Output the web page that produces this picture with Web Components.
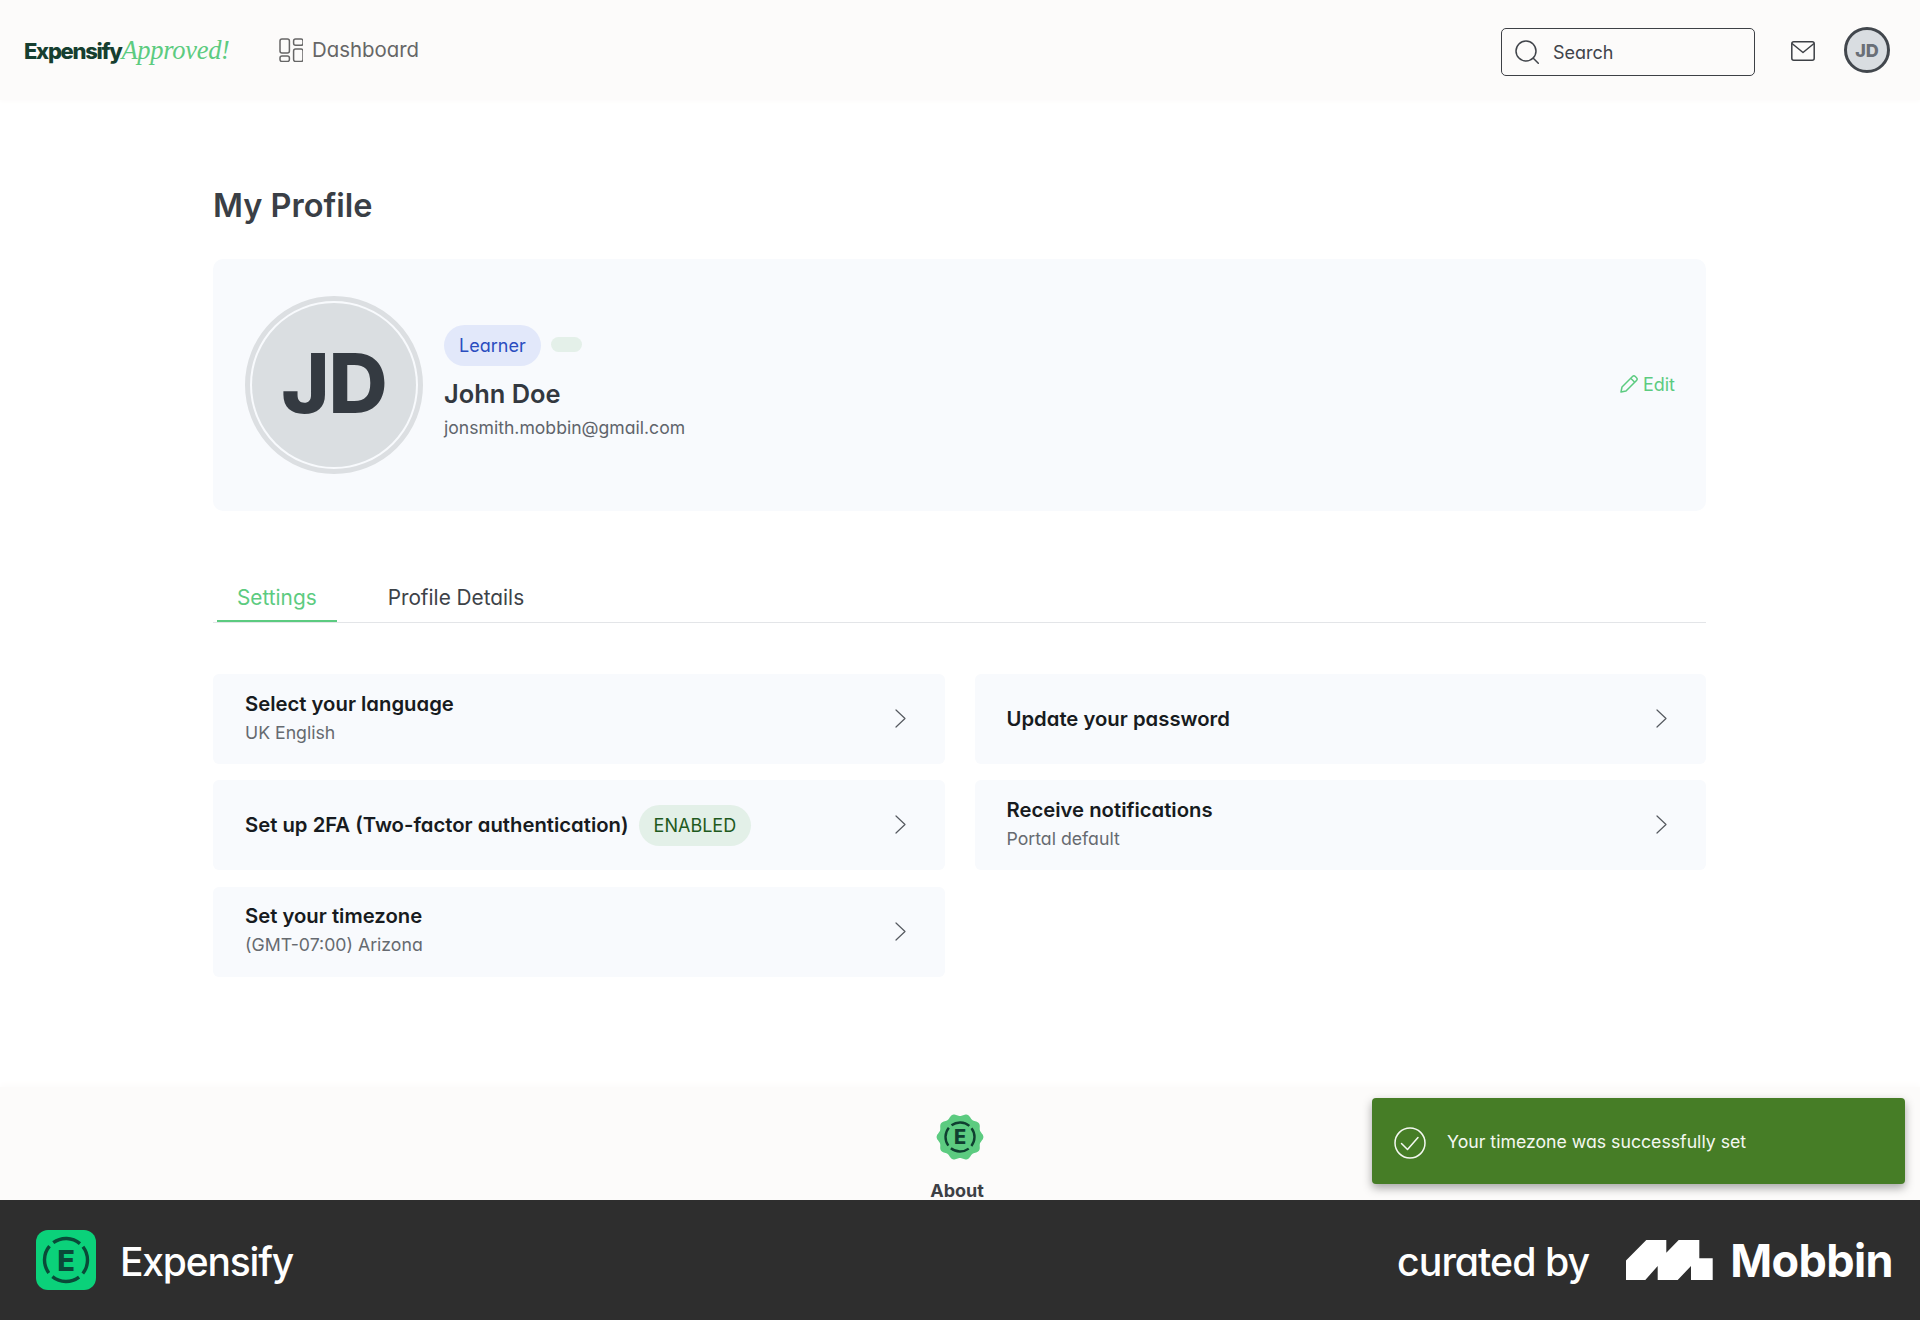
<!DOCTYPE html>
<html lang="en">
<head>
<meta charset="utf-8">
<title>My Profile</title>
<style>
    html, body {
        margin: 0;
        height: 1320px;
        overflow: hidden;
        background: white;
    }

    body {
        display: flex;
        flex-direction: column;
        position: relative;
        font-family: Inter, "Noto Sans", sans-serif;
        font-feature-settings: "cv11";
        color: #33383f;
    }

    profile-page {
        flex: 1;
    }
</style>
</head>
<body>
<app-header></app-header>
<profile-page>
    <profile-card name="John Doe" email="jonsmith.mobbin@gmail.com" initials="JD"></profile-card>
    <tab-bar></tab-bar>
    <settings-grid>
        <setting-row slot="left" label="Select your language" value="UK English"></setting-row>
        <setting-row slot="left" label="Set up 2FA (Two-factor authentication)" badge="ENABLED"></setting-row>
        <setting-row slot="left" label="Set your timezone" value="(GMT-07:00) Arizona"></setting-row>
        <setting-row slot="right" label="Update your password"></setting-row>
        <setting-row slot="right" label="Receive notifications" value="Portal default"></setting-row>
    </settings-grid>
</profile-page>
<site-footer></site-footer>
<toast-message>Your timezone was successfully set</toast-message>
<brand-bar></brand-bar>

<script>
class AppHeader extends HTMLElement {
    connectedCallback() {
        this.attachShadow({mode: "open"}).innerHTML = `
            <style>
                :host {
                    display: flex;
                    align-items: center;
                    height: 100px;
                    flex: none;
                    padding: 0 30px 0 24px;
                    background: #fcfbfa;
                    box-shadow: 0 2px 4px #fdfcfb;
                }
                .logo {
                    display: flex;
                    align-items: baseline;
                    width: 255px;
                }
                .logo b {
                    font-size: 22px;
                    font-weight: 800;
                    letter-spacing: -1.3px;
                    color: #163f30;
                }
                .logo i {
                    font: italic 400 26.5px "Liberation Serif", serif;
                    letter-spacing: -0.3px;
                    color: #5ccb80;
                }
                .nav {
                    display: flex;
                    align-items: center;
                    gap: 9px;
                    margin-top: -1px;
                    font-size: 20.4px;
                    color: #666666;
                }
                .search {
                    display: flex;
                    align-items: center;
                    gap: 14px;
                    box-sizing: border-box;
                    width: 254px;
                    height: 48px;
                    margin: 4px 0 0 auto;
                    padding-left: 13px;
                    border: 1.5px solid #3d4045;
                    border-radius: 5px;
                    font-size: 18px;
                    color: #40444a;
                }
                .mail {
                    margin: 1px 0 0 36px;
                }
                .avatar {
                    display: grid;
                    place-items: center;
                    box-sizing: border-box;
                    width: 46px;
                    height: 46px;
                    margin-left: 29px;
                    border: 3px solid #42474d;
                    border-radius: 50%;
                    background: #d9dde1;
                    font-size: 18px;
                    font-weight: 800;
                    color: #6a6f77;
                }
                svg {
                    display: block;
                    fill: none;
                    flex: none;
                }
            </style>
            <div class="logo"><b>Expensify</b><i>Approved!</i></div>
            <div class="nav">
                <svg width="24" height="24" viewBox="0 0 24 24" stroke="#666" stroke-width="1.5">
                    <rect x="1" y="1" width="9.4" height="14" rx="2"/>
                    <rect x="1" y="18" width="9.4" height="5.5" rx="2"/>
                    <rect x="14.6" y="1" width="9.4" height="6.3" rx="2"/>
                    <rect x="14.6" y="11" width="9.4" height="12.5" rx="2"/>
                </svg>
                <span>Dashboard</span>
            </div>
            <div class="search">
                <svg width="24" height="24" viewBox="0 0 24 24" stroke="#40444a" stroke-width="1.5" stroke-linecap="round">
                    <circle cx="11" cy="11" r="10"/>
                    <path d="M18.3 18.3l5 5"/>
                </svg>
                <span>Search</span>
            </div>
            <svg class="mail" width="24" height="20" viewBox="0 0 24 20" stroke="#3d4045" stroke-width="1.5" stroke-linejoin="round">
                <rect x="0.8" y="0.8" width="22.4" height="18.4" rx="2"/>
                <path d="M1 2.5l11 9 11-9"/>
            </svg>
            <div class="avatar">JD</div>
        `;
    }
}

class ProfileCard extends HTMLElement {
    connectedCallback() {
        const name = this.getAttribute("name");
        const email = this.getAttribute("email");
        const initials = this.getAttribute("initials");
        this.attachShadow({mode: "open"}).innerHTML = `
            <style>
                :host {
                    display: flex;
                    align-items: center;
                    box-sizing: border-box;
                    height: 252px;
                    padding: 0 31px 0 32px;
                    border-radius: 10px;
                    background: #f8fafd;
                }
                .avatar {
                    display: grid;
                    place-items: center;
                    box-sizing: border-box;
                    width: 178px;
                    height: 178px;
                    flex: none;
                    border: 5px solid #dcdfe2;
                    border-radius: 50%;
                    background: #dadee1 content-box;
                    padding: 2px;
                    font-size: 82px;
                    line-height: 160px;
                    font-weight: 800;
                    letter-spacing: -1px;
                    color: #343a41;
                }
                .avatar span {
                    margin-top: -2px;
                }
                .info {
                    margin-left: 21px;
                    padding-bottom: 5px;
                }
                .pills {
                    display: flex;
                    align-items: center;
                    gap: 10px;
                }
                .learner {
                    padding: 0 15px;
                    height: 41px;
                    line-height: 41px;
                    border-radius: 21px;
                    background: #e2e8fa;
                    font-size: 18px;
                    color: #2a4dc0;
                }
                .empty {
                    width: 31px;
                    height: 15px;
                    margin-top: -2px;
                    border-radius: 8px;
                    background: #e4f0e9;
                }
                .name {
                    margin-top: 12px;
                    font-size: 25.4px;
                    line-height: 32px;
                    font-weight: 600;
                }
                .email {
                    margin-top: 6px;
                    font-size: 17.6px;
                    line-height: 24px;
                    color: #5f646b;
                }
                .edit {
                    display: flex;
                    align-items: center;
                    gap: 5px;
                    margin: -2px 0 0 auto;
                    font-size: 18px;
                    color: #5ccb80;
                }
            </style>
            <div class="avatar"><span>${initials}</span></div>
            <div class="info">
                <div class="pills"><span class="learner">Learner</span><span class="empty"></span></div>
                <div class="name">${name}</div>
                <div class="email">${email}</div>
            </div>
            <div class="edit">
                <svg width="18" height="18" viewBox="0 0 18 18" fill="none" stroke="#5ccb80" stroke-width="1.5" stroke-linejoin="round">
                    <path d="M1 17l1-5L12.5 1.5a2 2 0 0 1 2.8 0l1.2 1.2a2 2 0 0 1 0 2.8L6 16z"/>
                    <path d="M11 3.5l3.5 3.5"/>
                </svg>
                <span>Edit</span>
            </div>
        `;
    }
}

class TabBar extends HTMLElement {
    connectedCallback() {
        this.attachShadow({mode: "open"}).innerHTML = `
            <style>
                :host {
                    display: flex;
                    gap: 31px;
                    margin-top: 63px;
                    padding-left: 4px;
                    border-bottom: 1px solid #e3e5e8;
                    font-size: 20.8px;
                }
                .tab {
                    padding: 0 20px;
                    height: 48px;
                    line-height: 48px;
                    box-sizing: border-box;
                    color: #3d4248;
                }
                .active {
                    color: #5ccb80;
                    border-bottom: 2px solid #5ccb80;
                    margin-bottom: -1px;
                }
            </style>
            <div class="tab active">Settings</div>
            <div class="tab">Profile Details</div>
        `;
    }
}

class SettingsGrid extends HTMLElement {
    connectedCallback() {
        this.attachShadow({mode: "open"}).innerHTML = `
            <style>
                :host {
                    display: grid;
                    grid-template-columns: 1fr 1fr;
                    gap: 30px;
                    margin-top: 51px;
                }
                .col {
                    display: flex;
                    flex-direction: column;
                    gap: 16.25px;
                }
            </style>
            <div class="col"><slot name="left"></slot></div>
            <div class="col"><slot name="right"></slot></div>
        `;
    }
}

class SettingRow extends HTMLElement {
    connectedCallback() {
        const label = this.getAttribute("label");
        const value = this.getAttribute("value");
        const badge = this.getAttribute("badge");
        this.attachShadow({mode: "open"}).innerHTML = `
            <style>
                :host {
                    display: flex;
                    align-items: center;
                    box-sizing: border-box;
                    height: 90px;
                    padding: 0 39px 0 32px;
                    border-radius: 6px;
                    background: #f8fafd;
                }
                .label {
                    font-size: 20.3px;
                    line-height: 28px;
                    font-weight: 600;
                    color: #171b20;
                }
                .line {
                    display: flex;
                    align-items: center;
                    gap: 10px;
                }
                .two-line {
                    padding-bottom: 4px;
                }
                .value {
                    font-size: 17.7px;
                    line-height: 24px;
                    margin-top: 3px;
                    color: #666a70;
                }
                .badge {
                    height: 41px;
                    line-height: 41px;
                    padding: 0 15px;
                    border-radius: 21px;
                    background: #e3f0e8;
                    font-size: 18px;
                    color: #1f5a1e;
                }
                svg {
                    margin: -1px 0 0 auto;
                    flex: none;
                }
            </style>
            <div class="${value ? "two-line" : ""}">
                <div class="line">
                    <span class="label">${label}</span>
                    ${badge ? `<span class="badge">${badge}</span>` : ""}
                </div>
                ${value ? `<div class="value">${value}</div>` : ""}
            </div>
            <svg width="11" height="19" viewBox="0 0 11 19" fill="none" stroke="#55595f" stroke-width="1.2" stroke-linecap="round" stroke-linejoin="round">
                <path d="M1 1l9 8.5L1 18"/>
            </svg>
        `;
    }
}

class SiteFooter extends HTMLElement {
    connectedCallback() {
        const seal = [];
        for (let i = 0; i < 180; i++) {
            const a = i * Math.PI / 90;
            const r = 22.2 + 1.2 * Math.cos(10 * a);
            seal.push(`${(23 + r * Math.cos(a)).toFixed(2)},${(23 + r * Math.sin(a)).toFixed(2)}`);
        }
        this.attachShadow({mode: "open"}).innerHTML = `
            <style>
                :host {
                    display: flex;
                    flex-direction: column;
                    align-items: center;
                    flex: none;
                    box-sizing: border-box;
                    height: 113px;
                    padding-top: 27px;
                    background: #fcfbfa;
                    box-shadow: 0 -3px 6px #fdfcfb;
                }
                svg {
                    display: block;
                    flex: none;
                    overflow: visible;
                }
                .about {
                    margin: 19px 6px 0 0;
                    font-size: 18px;
                    line-height: 24px;
                    font-weight: 700;
                    color: #3d4045;
                }
                text {
                    font-family: Inter, sans-serif;
                    font-weight: 800;
                    font-size: 20px;
                    fill: #0f3f30;
                }
            </style>
            <svg width="46" height="46" viewBox="0 0 46 46">
                <polygon fill="#5ccb80" points="${seal.join(" ")}"/>
                <circle cx="23" cy="23" r="14.5" fill="none" stroke="#0f3f30" stroke-width="2.4" stroke-dasharray="19 3.78" transform="rotate(-37.5 23 23)"/>
                <text x="23" y="30" text-anchor="middle">E</text>
            </svg>
            <div class="about">About</div>
        `;
    }
}

class ToastMessage extends HTMLElement {
    connectedCallback() {
        this.attachShadow({mode: "open"}).innerHTML = `
            <style>
                :host {
                    position: absolute;
                    left: 1372px;
                    top: 1098px;
                    width: 533px;
                    height: 86px;
                    box-sizing: border-box;
                    display: flex;
                    align-items: center;
                    gap: 21px;
                    padding-left: 22px;
                    border-radius: 4px;
                    background: #467d26;
                    box-shadow: 0 4px 10px rgba(0, 0, 0, .35);
                    font-size: 17.7px;
                    color: #f4f8f1;
                }
                svg {
                    flex: none;
                    margin-top: 4px;
                }
            </style>
            <svg width="32" height="32" viewBox="0 0 32 32" fill="none" stroke="#f4f8f1" stroke-width="1.5" stroke-linecap="round" stroke-linejoin="round">
                <circle cx="16" cy="16" r="15"/>
                <path d="M7.5 16.5l6 6L24 10.5"/>
            </svg>
            <span><slot></slot></span>
        `;
    }
}

class BrandBar extends HTMLElement {
    connectedCallback() {
        this.attachShadow({mode: "open"}).innerHTML = `
            <style>
                :host {
                    display: flex;
                    align-items: center;
                    flex: none;
                    position: relative;
                    box-sizing: border-box;
                    height: 120px;
                    padding: 0 27px 0 36px;
                    background: #2e2e2e;
                    color: #ffffff;
                }
                .mark {
                    display: block;
                    flex: none;
                }
                .expensify {
                    margin: 3px 0 0 24px;
                    font-size: 39px;
                    font-weight: 500;
                    letter-spacing: -1.2px;
                }
                .curated {
                    margin: 3px 0 0 auto;
                    font-size: 39.3px;
                    font-weight: 500;
                    letter-spacing: -1px;
                }
                .mobbin-mark {
                    margin-left: 37px;
                    flex: none;
                }
                .mobbin {
                    margin: 1px 0 0 17px;
                    font-size: 45px;
                    font-weight: 700;
                    letter-spacing: -0.6px;
                }
            </style>
            <svg class="mark" width="60" height="60" viewBox="0 0 60 60">
                <rect width="60" height="60" rx="12" fill="#0bd17a"/>
                <circle cx="30" cy="30" r="21.5" fill="none" stroke="#0a4a38" stroke-width="3.4" stroke-dasharray="28.5 5.27" transform="rotate(-38 30 30)"/>
                <text x="30" y="40.5" text-anchor="middle" font-family="Inter, sans-serif" font-weight="800" font-size="29" fill="#0a4a38">E</text>
            </svg>
            <span class="expensify">Expensify</span>
            <span class="curated">curated by</span>
            <svg class="mobbin-mark" width="87" height="40" viewBox="0 0 87 40" fill="#fff">
                <path d="M0 40V20.5L20.3 0H40.3V12.7L52.7 0H73.3V18.3H86.7V40H65V26L51.7 40H31.7V26L19.3 40z"/>
            </svg>
            <span class="mobbin">Mobbin</span>
        `;
    }
}

class ProfilePage extends HTMLElement {
    connectedCallback() {
        this.attachShadow({mode: "open"}).innerHTML = `
            <style>
                :host {
                    display: block;
                    padding: 0 214px 0 213px;
                }
                h1 {
                    margin: 85px 0 33px;
                    font-size: 32.5px;
                    line-height: 41px;
                    font-weight: 600;
                    color: #3a3f46;
                }
            </style>
            <h1>My Profile</h1>
            <slot></slot>
        `;
    }
}

customElements.define("app-header", AppHeader);
customElements.define("profile-card", ProfileCard);
customElements.define("tab-bar", TabBar);
customElements.define("settings-grid", SettingsGrid);
customElements.define("setting-row", SettingRow);
customElements.define("site-footer", SiteFooter);
customElements.define("toast-message", ToastMessage);
customElements.define("brand-bar", BrandBar);
customElements.define("profile-page", ProfilePage);
</script>
</body>
</html>
